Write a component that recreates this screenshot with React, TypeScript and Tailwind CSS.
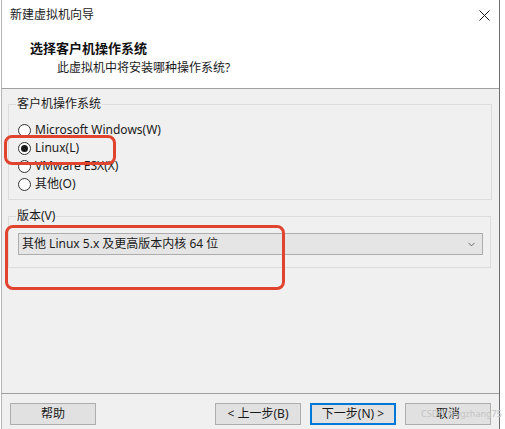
import { ChevronDown } from 'lucide-react';

const osOptions = [
  { label: 'Microsoft Windows(W)', checked: false },
  { label: 'Linux(L)', checked: true },
  { label: 'VMware ESX(X)', checked: false },
  { label: '其他(O)', checked: false },
];

function Radio({ label, checked }: { label: string; checked: boolean }) {
  return (
    <div className="flex items-center h-[18px] pl-[9px]">
      <span className="w-[13px] h-[13px] rounded-full border border-[#333] bg-white flex items-center justify-center">
        {checked && <span className="w-[7px] h-[7px] rounded-full bg-[#1a1a1a]" />}
      </span>
      <span className="ml-[4px] text-[12px] text-[#1a1a1a]">{label}</span>
    </div>
  );
}

function Button({ children, primary }: { children: React.ReactNode; primary?: boolean }) {
  return (
    <button
      className={`w-[86px] h-[22px] flex items-center justify-center text-[12px] text-[#1a1a1a] bg-[#e1e1e1] ${
        primary ? 'border-2 border-[#0078d7]' : 'border border-[#adadad]'
      }`}
    >
      {children}
    </button>
  );
}

export default function App() {
  return (
    <div
      className="relative w-[505px] h-[429px] bg-white overflow-hidden"
      style={{ fontFamily: '"Noto Sans", "Noto Sans CJK SC", sans-serif' }}
    >
      {/* Window */}
      <div className="ml-[1px] w-[499px] h-[429px] border-l border-[#b5b5b5] border-r border-r-[#6e6e6e] flex flex-col">
        {/* Title bar */}
        <div className="h-[30px] flex items-center justify-between pl-[8px] pr-[9px] bg-white">
          <span className="text-[12px] text-[#1a1a1a]">新建虚拟机向导</span>
          <svg width="11" height="11" viewBox="0 0 11 11">
            <path d="M0.5 0.5 L10.5 10.5 M10.5 0.5 L0.5 10.5" stroke="#1a1a1a" strokeWidth="1" />
          </svg>
        </div>

        {/* Header */}
        <div className="h-[59px] bg-white border-b border-[#a0a0a0] flex flex-col pl-[28px] pt-[9px]">
          <span className="text-[13px] font-bold text-[#111] leading-[18px]">选择客户机操作系统</span>
          <span className="ml-[27px] mt-[2px] text-[12px] text-[#1a1a1a] leading-[18px]">此虚拟机中将安装哪种操作系统?</span>
        </div>

        {/* Body */}
        <div className="h-[304px] bg-[#f0f0f0] pt-[7px] pl-[6px] pr-[7px]">
          <fieldset className="border border-[#dcdcdc] pt-[9px] pb-[6px]">
            <legend className="ml-[7px] px-[1px] text-[12px] leading-4 text-[#1a1a1a]">客户机操作系统</legend>
            {osOptions.map((o) => (
              <Radio key={o.label} label={o.label} checked={o.checked} />
            ))}
          </fieldset>

          <fieldset className="mt-2 mr-[1px] border border-[#dcdcdc] pt-[9px] pb-[12px] pl-[9px] pr-[7px]">
            <legend className="ml-[-2px] px-[1px] text-[12px] leading-4 text-[#1a1a1a]">版本(V)</legend>
            <div className="h-[22px] bg-[#e5e5e5] border border-[#adadad] flex items-center justify-between pl-[3px] pr-[5px]">
              <span className="text-[12px] text-[#1a1a1a]">其他 Linux 5.x 及更高版本内核 64 位</span>
              <ChevronDown className="w-[11px] h-[11px] text-[#333]" strokeWidth={1.5} />
            </div>
          </fieldset>
        </div>

        {/* Footer */}
        <div className="flex-1 bg-[#f0f0f0] border-t border-[#a0a0a0] flex items-start pt-[9px] pl-[8px]">
          <Button>帮助</Button>
          <div className="ml-[119px] flex gap-[9px]">
            <Button>&lt; 上一步(B)</Button>
            <Button primary>下一步(N) &gt;</Button>
            <Button>取消</Button>
          </div>
        </div>
      </div>

      {/* Annotation highlights */}
      <div className="absolute left-[4px] top-[135px] w-[112px] h-[30px] border-[3px] border-[#e0442f] rounded-lg" />
      <div className="absolute left-[5px] top-[225px] w-[280px] h-[65px] border-[3px] border-[#e0442f] rounded-lg" />

      {/* Watermark */}
      <span className="absolute left-[421px] top-[408px] whitespace-nowrap text-[9px] leading-3 text-[#c4c4c4]">CSDN @ygzhang75</span>
    </div>
  );
}
